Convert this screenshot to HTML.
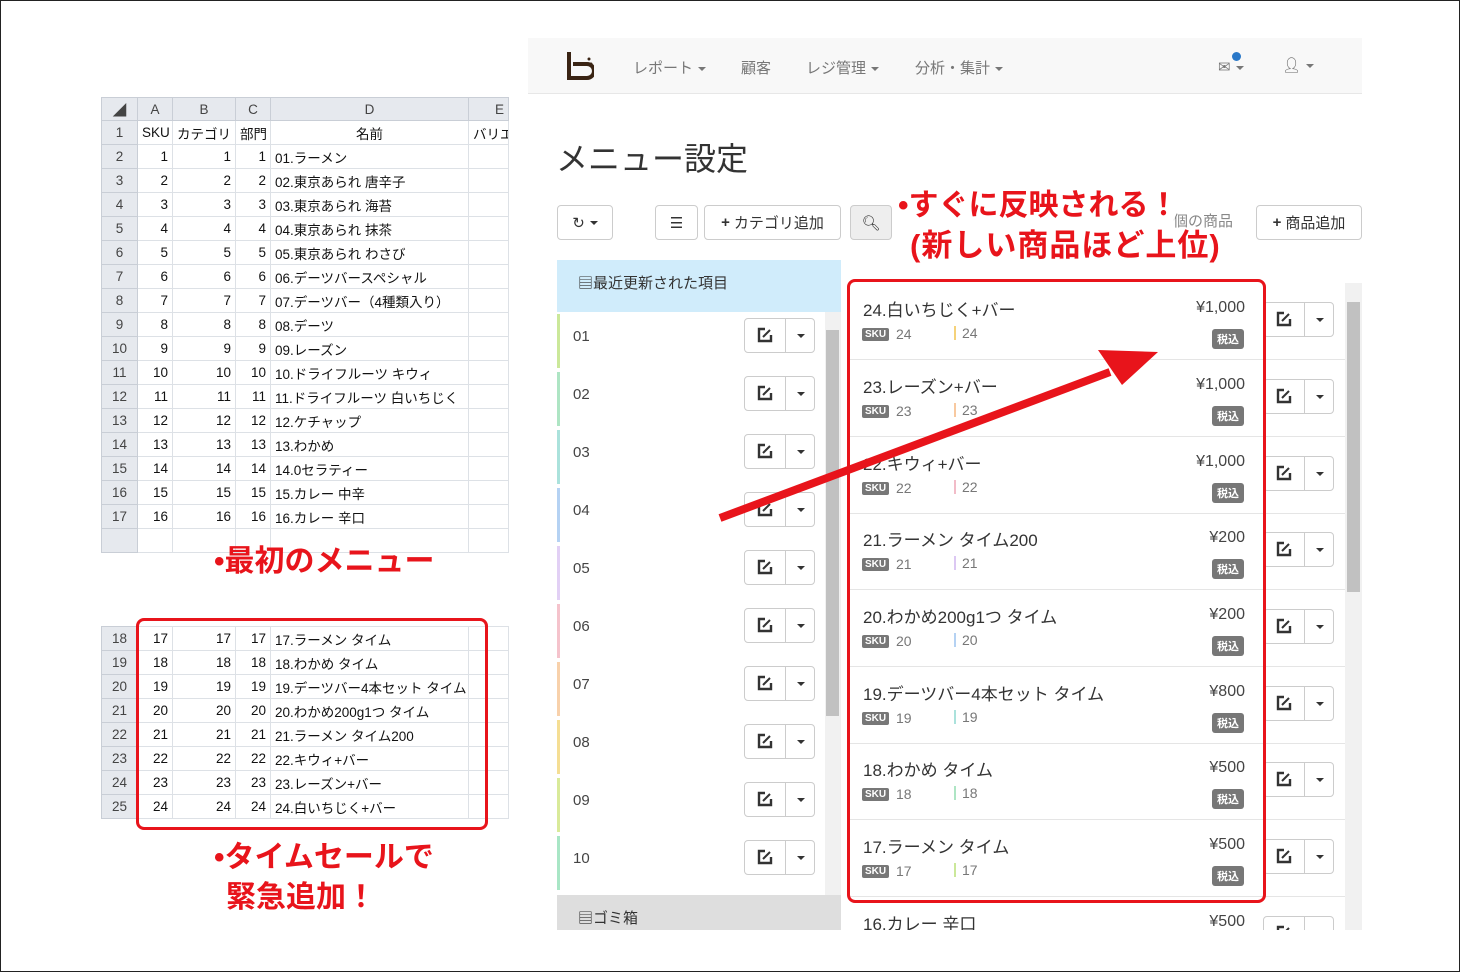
<!DOCTYPE html>
<html><head><meta charset="utf-8"><style>
*{box-sizing:border-box;margin:0;padding:0}
body{width:1460px;height:972px;position:relative;overflow:hidden;background:#fff;font-family:"Liberation Sans","Noto Sans CJK JP",sans-serif;color:#333}
.frame{position:absolute;left:0;top:0;width:1460px;height:972px;border:1px solid #222}
table.xl{position:absolute;border-collapse:collapse;table-layout:fixed;font-size:13.5px;color:#111}
table.xl td{height:24px;border:1px solid #dde1e6;padding:0 4px;white-space:nowrap;overflow:hidden}
table.xl td.rh{background:#e6e9ee;color:#444;text-align:center;border-color:#c9ced6}
table.xl td.n{text-align:right}
table.xl tr.hd td{background:#e6e9ee;text-align:center;color:#444;height:23px;border-color:#c9ced6}
.red{color:#e8141b;font-weight:bold;position:absolute;white-space:nowrap}
.rbox{position:absolute;border:3px solid #e8141b;border-radius:8px}
.app{position:absolute;left:528px;top:38px;width:834px;height:892px;background:#fff;overflow:hidden}
.nav{position:absolute;left:0;top:0;width:834px;height:56px;background:#f8f8f8;border-bottom:1px solid #e7e7e7}
.nav span{position:absolute;top:19px;font-size:15px;color:#777}
.car{display:inline-block;width:0;height:0;border-left:4px solid transparent;border-right:4px solid transparent;border-top:4px solid #777;vertical-align:middle;margin-left:5px}
.btn{position:absolute;border:1px solid #ccc;border-radius:4px;background:#fff;font-size:15px;color:#333;display:flex;align-items:center;justify-content:center}
.eg{position:absolute;width:71px;height:35px;border:1px solid #ccc;border-radius:4px;background:#fff}
.eg i{position:absolute;left:40px;top:0;width:1px;height:33px;background:#ccc}
.eg svg{position:absolute;left:12px;top:8px}
.eg b{position:absolute;left:52px;top:15px;border-left:4px solid transparent;border-right:4px solid transparent;border-top:4px solid #333}
.li{position:absolute;left:29px;width:268px;height:54px;border-left:3px solid}
.li span{position:absolute;left:13px;top:14px;font-size:15px;color:#444}
.ri{position:absolute;left:322px;width:495px;height:77px;border-bottom:1px solid #e5e5e5}
.ri .nm{position:absolute;left:13px;top:13px;font-size:17px;color:#333}
.ri .pr{position:absolute;right:100px;top:16px;font-size:16px;color:#444}
.ri .sku{position:absolute;left:12px;top:45px;background:#777;color:#fff;font-size:10px;font-weight:bold;padding:1px 3px;border-radius:2px}
.ri .s1{position:absolute;left:46px;top:43px;font-size:14px;color:#777}
.ri .s2{position:absolute;left:104px;top:43px;font-size:14px;color:#777;border-left:2px solid;padding-left:6px;line-height:14px}
.ri .tax{position:absolute;right:101px;top:46px;background:#777;color:#fff;font-size:11px;font-weight:bold;padding:2px 5px;border-radius:3px}
.ri .eg{left:413px;top:19px}
</style></head><body>
<div class="frame"></div>

<table class="xl" style="left:101px;top:97px;width:407px">
<colgroup><col style="width:36px"><col style="width:35px"><col style="width:63px"><col style="width:35px"><col style="width:198px"><col style="width:40px"></colgroup>
<tr class="hd"><td>◢</td><td>A</td><td>B</td><td>C</td><td>D</td><td style="text-align:right">E</td></tr>
<tr><td class="rh">1</td><td>SKU</td><td>カテゴリ</td><td>部門</td><td style="text-align:center">名前</td><td>バリエ</td></tr>
<tr><td class="rh">2</td><td class="n">1</td><td class="n">1</td><td class="n">1</td><td>01.ラーメン</td><td></td></tr>
<tr><td class="rh">3</td><td class="n">2</td><td class="n">2</td><td class="n">2</td><td>02.東京あられ 唐辛子</td><td></td></tr>
<tr><td class="rh">4</td><td class="n">3</td><td class="n">3</td><td class="n">3</td><td>03.東京あられ 海苔</td><td></td></tr>
<tr><td class="rh">5</td><td class="n">4</td><td class="n">4</td><td class="n">4</td><td>04.東京あられ 抹茶</td><td></td></tr>
<tr><td class="rh">6</td><td class="n">5</td><td class="n">5</td><td class="n">5</td><td>05.東京あられ わさび</td><td></td></tr>
<tr><td class="rh">7</td><td class="n">6</td><td class="n">6</td><td class="n">6</td><td>06.デーツバースペシャル</td><td></td></tr>
<tr><td class="rh">8</td><td class="n">7</td><td class="n">7</td><td class="n">7</td><td>07.デーツバー（4種類入り）</td><td></td></tr>
<tr><td class="rh">9</td><td class="n">8</td><td class="n">8</td><td class="n">8</td><td>08.デーツ</td><td></td></tr>
<tr><td class="rh">10</td><td class="n">9</td><td class="n">9</td><td class="n">9</td><td>09.レーズン</td><td></td></tr>
<tr><td class="rh">11</td><td class="n">10</td><td class="n">10</td><td class="n">10</td><td>10.ドライフルーツ キウィ</td><td></td></tr>
<tr><td class="rh">12</td><td class="n">11</td><td class="n">11</td><td class="n">11</td><td>11.ドライフルーツ 白いちじく</td><td></td></tr>
<tr><td class="rh">13</td><td class="n">12</td><td class="n">12</td><td class="n">12</td><td>12.ケチャップ</td><td></td></tr>
<tr><td class="rh">14</td><td class="n">13</td><td class="n">13</td><td class="n">13</td><td>13.わかめ</td><td></td></tr>
<tr><td class="rh">15</td><td class="n">14</td><td class="n">14</td><td class="n">14</td><td>14.0セラティー</td><td></td></tr>
<tr><td class="rh">16</td><td class="n">15</td><td class="n">15</td><td class="n">15</td><td>15.カレー 中辛</td><td></td></tr>
<tr><td class="rh">17</td><td class="n">16</td><td class="n">16</td><td class="n">16</td><td>16.カレー 辛口</td><td></td></tr>
<tr><td class="rh"></td><td></td><td></td><td></td><td></td><td></td></tr>
</table>

<table class="xl" style="left:101px;top:626px;width:407px">
<colgroup><col style="width:36px"><col style="width:35px"><col style="width:63px"><col style="width:35px"><col style="width:198px"><col style="width:40px"></colgroup>
<tr><td class="rh">18</td><td class="n">17</td><td class="n">17</td><td class="n">17</td><td>17.ラーメン タイム</td><td></td></tr>
<tr><td class="rh">19</td><td class="n">18</td><td class="n">18</td><td class="n">18</td><td>18.わかめ タイム</td><td></td></tr>
<tr><td class="rh">20</td><td class="n">19</td><td class="n">19</td><td class="n">19</td><td>19.デーツバー4本セット タイム</td><td></td></tr>
<tr><td class="rh">21</td><td class="n">20</td><td class="n">20</td><td class="n">20</td><td>20.わかめ200g1つ タイム</td><td></td></tr>
<tr><td class="rh">22</td><td class="n">21</td><td class="n">21</td><td class="n">21</td><td>21.ラーメン タイム200</td><td></td></tr>
<tr><td class="rh">23</td><td class="n">22</td><td class="n">22</td><td class="n">22</td><td>22.キウィ+バー</td><td></td></tr>
<tr><td class="rh">24</td><td class="n">23</td><td class="n">23</td><td class="n">23</td><td>23.レーズン+バー</td><td></td></tr>
<tr><td class="rh">25</td><td class="n">24</td><td class="n">24</td><td class="n">24</td><td>24.白いちじく+バー</td><td></td></tr>
</table>

<div class="red" style="left:214px;top:536px;font-size:30px">•最初のメニュー</div>
<div class="rbox" style="left:136px;top:618px;width:352px;height:212px"></div>
<div class="red" style="left:214px;top:832px;font-size:30px">•タイムセールで</div>
<div class="red" style="left:226px;top:872px;font-size:30px">緊急追加！</div>

<div class="app">
 <div class="nav">
  <svg style="position:absolute;left:36px;top:12px" width="30" height="30" viewBox="0 0 30 30"><path d="M5 2v26h18a4 4 0 0 0 0-14H9" fill="none" stroke="#3a2414" stroke-width="4"/><circle cx="25" cy="9" r="1.5" fill="#3a2414"/><circle cx="27" cy="14" r="1.5" fill="#3a2414"/></svg>
  <span style="left:105px">レポート<i class="car"></i></span>
  <span style="left:213px">顧客</span>
  <span style="left:278px">レジ管理<i class="car"></i></span>
  <span style="left:387px">分析・集計<i class="car"></i></span>
  <span style="left:690px;top:20px">✉<i class="car"></i></span>
  <div style="position:absolute;left:704px;top:14px;width:9px;height:9px;border-radius:50%;background:#2a78c8"></div>
  <span style="left:754px;top:18px;color:#666">👤︎<i class="car"></i></span>
 </div>
 <div style="position:absolute;left:28px;top:96px;font-size:32px;color:#333">メニュー設定</div>
 <div class="btn" style="left:29px;top:167px;width:56px;height:35px">↻<i class="car" style="border-top-color:#333"></i></div>
 <div class="btn" style="left:127px;top:167px;width:43px;height:35px">☰</div>
 <div class="btn" style="left:176px;top:167px;width:137px;height:35px"><b style="margin-right:4px">+</b>カテゴリ追加</div>
 <div class="btn" style="left:322px;top:167px;width:42px;height:35px;background:#eee">&#x1F50D;&#xFE0E;</div>
 <div style="position:absolute;left:645px;top:172px;font-size:15px;color:#888">個の商品</div>
 <div class="btn" style="left:728px;top:167px;width:106px;height:35px"><b style="margin-right:4px">+</b>商品追加</div>

 <div style="position:absolute;left:29px;top:222px;width:284px;height:52px;background:#d0ecfb"></div>
 <div style="position:absolute;left:50px;top:234px;font-size:15px;color:#333">▤最近更新された項目</div>
 <div style="position:absolute;left:297px;top:274px;width:16px;height:584px;background:#f1f1f1"></div>
 <div style="position:absolute;left:298px;top:292px;width:13px;height:386px;background:#c1c1c1"></div>

 <div class="li" style="top:276px;border-color:#cbe89a"><span>01</span><div class="eg" style="left:184px;top:4px"><svg width="16" height="16" viewBox="0 0 16 16"><path d="M8 2H2v12h12V8" fill="none" stroke="#333" stroke-width="2.4"/><path d="M6 10l7-7" stroke="#333" stroke-width="2"/></svg><i></i><b></b></div></div>
 <div class="li" style="top:334px;border-color:#aee5c4"><span>02</span><div class="eg" style="left:184px;top:4px"><svg width="16" height="16" viewBox="0 0 16 16"><path d="M8 2H2v12h12V8" fill="none" stroke="#333" stroke-width="2.4"/><path d="M6 10l7-7" stroke="#333" stroke-width="2"/></svg><i></i><b></b></div></div>
 <div class="li" style="top:392px;border-color:#abe2dc"><span>03</span><div class="eg" style="left:184px;top:4px"><svg width="16" height="16" viewBox="0 0 16 16"><path d="M8 2H2v12h12V8" fill="none" stroke="#333" stroke-width="2.4"/><path d="M6 10l7-7" stroke="#333" stroke-width="2"/></svg><i></i><b></b></div></div>
 <div class="li" style="top:450px;border-color:#b5d2f3"><span>04</span><div class="eg" style="left:184px;top:4px"><svg width="16" height="16" viewBox="0 0 16 16"><path d="M8 2H2v12h12V8" fill="none" stroke="#333" stroke-width="2.4"/><path d="M6 10l7-7" stroke="#333" stroke-width="2"/></svg><i></i><b></b></div></div>
 <div class="li" style="top:508px;border-color:#e2d0f5"><span>05</span><div class="eg" style="left:184px;top:4px"><svg width="16" height="16" viewBox="0 0 16 16"><path d="M8 2H2v12h12V8" fill="none" stroke="#333" stroke-width="2.4"/><path d="M6 10l7-7" stroke="#333" stroke-width="2"/></svg><i></i><b></b></div></div>
 <div class="li" style="top:566px;border-color:#f5c3cc"><span>06</span><div class="eg" style="left:184px;top:4px"><svg width="16" height="16" viewBox="0 0 16 16"><path d="M8 2H2v12h12V8" fill="none" stroke="#333" stroke-width="2.4"/><path d="M6 10l7-7" stroke="#333" stroke-width="2"/></svg><i></i><b></b></div></div>
 <div class="li" style="top:624px;border-color:#f8d1ab"><span>07</span><div class="eg" style="left:184px;top:4px"><svg width="16" height="16" viewBox="0 0 16 16"><path d="M8 2H2v12h12V8" fill="none" stroke="#333" stroke-width="2.4"/><path d="M6 10l7-7" stroke="#333" stroke-width="2"/></svg><i></i><b></b></div></div>
 <div class="li" style="top:682px;border-color:#f5de94"><span>08</span><div class="eg" style="left:184px;top:4px"><svg width="16" height="16" viewBox="0 0 16 16"><path d="M8 2H2v12h12V8" fill="none" stroke="#333" stroke-width="2.4"/><path d="M6 10l7-7" stroke="#333" stroke-width="2"/></svg><i></i><b></b></div></div>
 <div class="li" style="top:740px;border-color:#d9ea9a"><span>09</span><div class="eg" style="left:184px;top:4px"><svg width="16" height="16" viewBox="0 0 16 16"><path d="M8 2H2v12h12V8" fill="none" stroke="#333" stroke-width="2.4"/><path d="M6 10l7-7" stroke="#333" stroke-width="2"/></svg><i></i><b></b></div></div>
 <div class="li" style="top:798px;border-color:#a9e6c6"><span>10</span><div class="eg" style="left:184px;top:4px"><svg width="16" height="16" viewBox="0 0 16 16"><path d="M8 2H2v12h12V8" fill="none" stroke="#333" stroke-width="2.4"/><path d="M6 10l7-7" stroke="#333" stroke-width="2"/></svg><i></i><b></b></div></div>
 <div style="position:absolute;left:29px;top:857px;width:284px;height:40px;background:#dedede"></div>
 <div style="position:absolute;left:50px;top:869px;font-size:15px;color:#333">▤ゴミ箱</div>

 <div style="position:absolute;left:817px;top:245px;width:17px;height:650px;background:#f1f1f1"></div>
 <div style="position:absolute;left:819px;top:264px;width:13px;height:290px;background:#c1c1c1"></div>

 <div class="ri" style="top:245px"><div class="nm">24.白いちじく+バー</div><div class="pr">¥1,000</div><div class="sku">SKU</div><div class="s1">24</div><div class="s2" style="border-color:#f5d27a">24</div><div class="tax">税込</div><div class="eg"><svg width="16" height="16" viewBox="0 0 16 16"><path d="M8 2H2v12h12V8" fill="none" stroke="#333" stroke-width="2.4"/><path d="M6 10l7-7" stroke="#333" stroke-width="2"/></svg><i></i><b></b></div></div>
 <div class="ri" style="top:322px"><div class="nm">23.レーズン+バー</div><div class="pr">¥1,000</div><div class="sku">SKU</div><div class="s1">23</div><div class="s2" style="border-color:#f8c9a0">23</div><div class="tax">税込</div><div class="eg"><svg width="16" height="16" viewBox="0 0 16 16"><path d="M8 2H2v12h12V8" fill="none" stroke="#333" stroke-width="2.4"/><path d="M6 10l7-7" stroke="#333" stroke-width="2"/></svg><i></i><b></b></div></div>
 <div class="ri" style="top:399px"><div class="nm">22.キウィ+バー</div><div class="pr">¥1,000</div><div class="sku">SKU</div><div class="s1">22</div><div class="s2" style="border-color:#f2bcc8">22</div><div class="tax">税込</div><div class="eg"><svg width="16" height="16" viewBox="0 0 16 16"><path d="M8 2H2v12h12V8" fill="none" stroke="#333" stroke-width="2.4"/><path d="M6 10l7-7" stroke="#333" stroke-width="2"/></svg><i></i><b></b></div></div>
 <div class="ri" style="top:475px"><div class="nm">21.ラーメン タイム200</div><div class="pr">¥200</div><div class="sku">SKU</div><div class="s1">21</div><div class="s2" style="border-color:#dcc8f3">21</div><div class="tax">税込</div><div class="eg"><svg width="16" height="16" viewBox="0 0 16 16"><path d="M8 2H2v12h12V8" fill="none" stroke="#333" stroke-width="2.4"/><path d="M6 10l7-7" stroke="#333" stroke-width="2"/></svg><i></i><b></b></div></div>
 <div class="ri" style="top:552px"><div class="nm">20.わかめ200g1つ タイム</div><div class="pr">¥200</div><div class="sku">SKU</div><div class="s1">20</div><div class="s2" style="border-color:#b5d2f3">20</div><div class="tax">税込</div><div class="eg"><svg width="16" height="16" viewBox="0 0 16 16"><path d="M8 2H2v12h12V8" fill="none" stroke="#333" stroke-width="2.4"/><path d="M6 10l7-7" stroke="#333" stroke-width="2"/></svg><i></i><b></b></div></div>
 <div class="ri" style="top:629px"><div class="nm">19.デーツバー4本セット タイム</div><div class="pr">¥800</div><div class="sku">SKU</div><div class="s1">19</div><div class="s2" style="border-color:#abe2dc">19</div><div class="tax">税込</div><div class="eg"><svg width="16" height="16" viewBox="0 0 16 16"><path d="M8 2H2v12h12V8" fill="none" stroke="#333" stroke-width="2.4"/><path d="M6 10l7-7" stroke="#333" stroke-width="2"/></svg><i></i><b></b></div></div>
 <div class="ri" style="top:705px"><div class="nm">18.わかめ タイム</div><div class="pr">¥500</div><div class="sku">SKU</div><div class="s1">18</div><div class="s2" style="border-color:#aee5c4">18</div><div class="tax">税込</div><div class="eg"><svg width="16" height="16" viewBox="0 0 16 16"><path d="M8 2H2v12h12V8" fill="none" stroke="#333" stroke-width="2.4"/><path d="M6 10l7-7" stroke="#333" stroke-width="2"/></svg><i></i><b></b></div></div>
 <div class="ri" style="top:782px"><div class="nm">17.ラーメン タイム</div><div class="pr">¥500</div><div class="sku">SKU</div><div class="s1">17</div><div class="s2" style="border-color:#cbe89a">17</div><div class="tax">税込</div><div class="eg"><svg width="16" height="16" viewBox="0 0 16 16"><path d="M8 2H2v12h12V8" fill="none" stroke="#333" stroke-width="2.4"/><path d="M6 10l7-7" stroke="#333" stroke-width="2"/></svg><i></i><b></b></div></div>
 <div class="ri" style="top:859px"><div class="nm">16.カレー 辛口</div><div class="pr">¥500</div><div class="eg"><svg width="16" height="16" viewBox="0 0 16 16"><path d="M8 2H2v12h12V8" fill="none" stroke="#333" stroke-width="2.4"/><path d="M6 10l7-7" stroke="#333" stroke-width="2"/></svg><i></i><b></b></div></div>
</div>

<div style="position:absolute;left:900px;top:182px;width:275px;height:86px;background:rgba(255,255,255,0.85)"></div>
<div class="red" style="left:898px;top:180px;font-size:30px">•すぐに反映される！</div>
<div class="red" style="left:910px;top:220px;font-size:31px;letter-spacing:1px">(新しい商品ほど上位)</div>
<div class="rbox" style="left:847px;top:279px;width:419px;height:624px"></div>

<svg style="position:absolute;left:0;top:0" width="1460" height="972">
<line x1="720" y1="518" x2="1110" y2="372" stroke="#e8141b" stroke-width="8"/>
<polygon points="1158,352 1098,350 1122,385" fill="#e8141b"/>
</svg>
</body></html>
